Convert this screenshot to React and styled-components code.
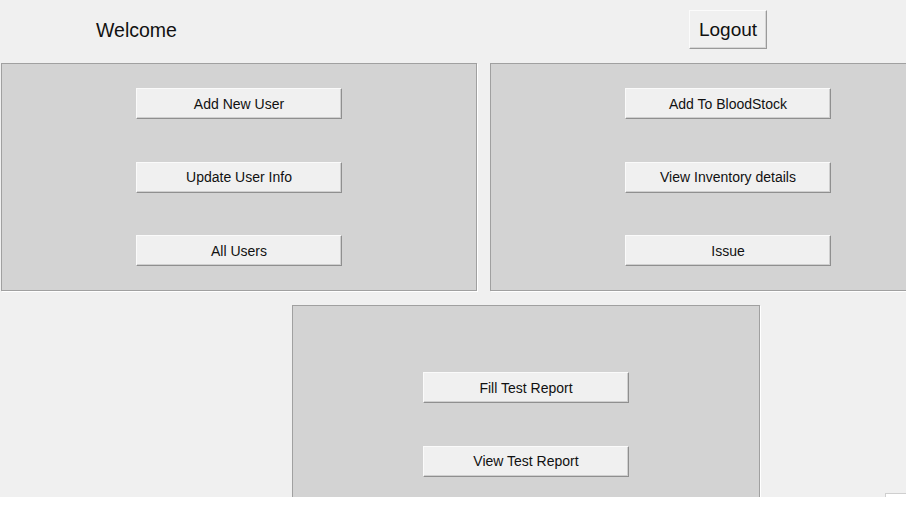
import React from 'react';
import styled, { createGlobalStyle } from 'styled-components';

const GlobalStyle = createGlobalStyle`
  html, body {
    margin: 0;
    padding: 0;
    background: #ffffff;
    font-family: "Liberation Sans", Arial, sans-serif;
  }
`;

const Frame = styled.div`
  position: relative;
  width: 906px;
  height: 497px;
  overflow: hidden;
  background: #f0f0f0;
`;

const Header = styled.div`
  display: flex;
  align-items: center;
  height: 63px;
  padding-left: 96px;
  box-sizing: border-box;
`;

const Welcome = styled.div`
  font-size: 19.5px;
  color: #111;
  width: 593px;
  margin-top: -2px;
`;

const LogoutButton = styled.button`
  width: 78px;
  height: 39px;
  margin-top: -4px;
  font-family: inherit;
  font-size: 19px;
  color: #111;
  background: #f0f0f0;
  border: 1px solid;
  border-color: #fbfbfb #9a9a9a #9a9a9a #fbfbfb;
  box-shadow: inset -1px -1px 0 #d6d6d6;
  padding: 0;
`;

const PanelRow = styled.div`
  display: flex;
  gap: 13px;
  padding-left: 1px;
  width: 1000px;
`;

const Panel = styled.div`
  display: flex;
  flex-direction: column;
  align-items: center;
  box-sizing: border-box;
  width: ${p => p.$width}px;
  height: ${p => p.$height}px;
  padding-top: ${p => p.$top}px;
  gap: 42.5px;
  flex-shrink: 0;
  background: #d3d3d3;
  border: 1px solid #a0a0a0;
  box-shadow: 1px 1px 0 #ffffff;
`;

const BottomRow = styled.div`
  display: flex;
  padding: 14px 0 0 292px;
`;

const ActionButton = styled.button`
  width: 206px;
  height: 31px;
  flex-shrink: 0;
  font-family: inherit;
  font-size: 14px;
  color: #111;
  background: #f0f0f0;
  border: 1px solid;
  border-color: #fafafa #8f8f8f #8f8f8f #fafafa;
  box-shadow: inset -1px -1px 0 #cfcfcf;
  padding: 0;
`;

const Grip = styled.div`
  position: absolute;
  right: 0;
  bottom: -13px;
  width: 20px;
  height: 16px;
  background: #ffffff;
  border-top: 1px solid #cfcfcf;
  border-left: 1px solid #cfcfcf;
`;

const Page = styled.div`
  position: relative;
`;

const leftActions = ['Add New User', 'Update User Info', 'All Users'];
const rightActions = ['Add To BloodStock', 'View Inventory details', 'Issue'];
const testActions = ['Fill Test Report', 'View Test Report'];

export default function App() {
  return (
    <Page>
      <GlobalStyle />
      <Frame>
        <Header>
          <Welcome>Welcome</Welcome>
          <LogoutButton type="button">Logout</LogoutButton>
        </Header>
        <PanelRow>
          <Panel $width={476} $height={228} $top={24}>
            {leftActions.map(label => (
              <ActionButton key={label} type="button">{label}</ActionButton>
            ))}
          </Panel>
          <Panel $width={476} $height={228} $top={24}>
            {rightActions.map(label => (
              <ActionButton key={label} type="button">{label}</ActionButton>
            ))}
          </Panel>
        </PanelRow>
        <BottomRow>
          <Panel $width={468} $height={260} $top={66}>
            {testActions.map(label => (
              <ActionButton key={label} type="button">{label}</ActionButton>
            ))}
          </Panel>
        </BottomRow>
      </Frame>
      <Grip />
    </Page>
  );
}
